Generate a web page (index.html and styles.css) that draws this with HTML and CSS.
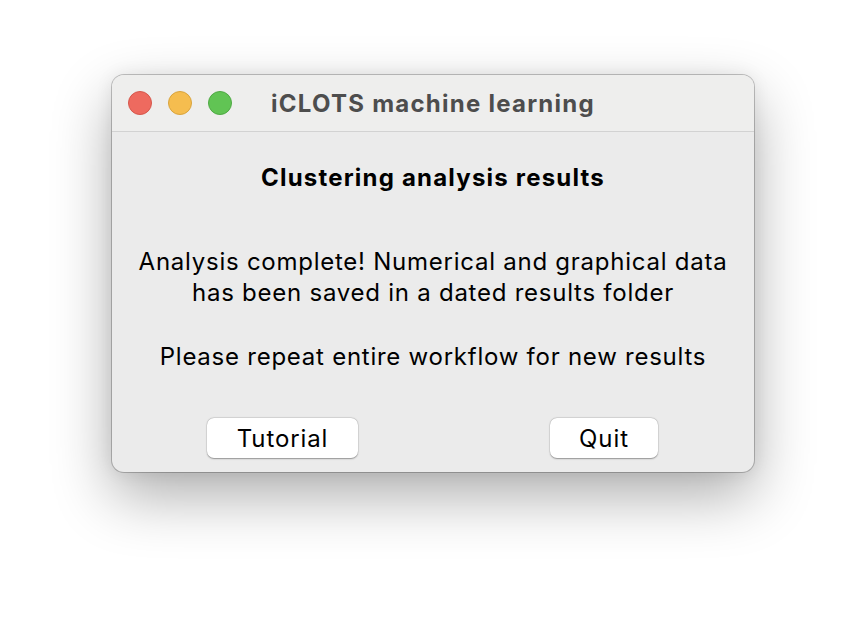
FILE: index.html
```html
<!DOCTYPE html>
<html>
<head>
<meta charset="utf-8">
<link rel="stylesheet" href="styles.css">
</head>
<body>
<div class="window">
  <div class="titlebar">
    <div class="lights">
      <span class="light red"></span>
      <span class="light yellow"></span>
      <span class="light green"></span>
    </div>
    <div class="title">iCLOTS machine learning</div>
  </div>
  <div class="content">
    <div class="heading">Clustering analysis results</div>
    <div class="para first">Analysis complete! Numerical and graphical data<br>has been saved in a dated results folder</div>
    <div class="para second">Please repeat entire workflow for new results</div>
    <div class="buttons">
      <button class="btn tutorial">Tutorial</button>
      <button class="btn quit">Quit</button>
    </div>
  </div>
</div>
</body>
</html>
```
FILE: styles.css
```css
html, body {
  margin: 0;
  padding: 0;
  background: #ffffff;
}
body {
  width: 866px;
  height: 620px;
  overflow: hidden;
  font-family: Inter, "Liberation Sans", sans-serif;
}
.window {
  margin-left: 112px;
  margin-top: 75px;
  width: 642px;
  height: 397px;
  box-sizing: border-box;
  border-radius: 12px;
  background: #ebebeb;
  box-shadow: 0 0 0 1px rgba(0,0,0,0.22), 0 24px 60px rgba(0,0,0,0.32), 0 0 18px rgba(0,0,0,0.08);
  overflow: hidden;
  display: flex;
  flex-direction: column;
}
.titlebar {
  height: 56px;
  flex: none;
  background: #eeeeed;
  border-bottom: 1px solid #d2d2d2;
  display: flex;
  align-items: center;
  position: relative;
}
.lights {
  display: flex;
  gap: 16px;
  padding-left: 16px;
  align-items: center;
}
.light {
  width: 24px;
  height: 24px;
  border-radius: 50%;
  box-sizing: border-box;
}
.red { background: #ee6a5f; border: 1px solid #d6574c; }
.yellow { background: #f5bd4f; border: 1px solid #d9a43d; }
.green { background: #61c454; border: 1px solid #4fa944; }
.title {
  position: absolute;
  left: 0;
  right: 0;
  top: 0;
  bottom: 0;
  display: flex;
  align-items: center;
  justify-content: center;
  font-weight: 700;
  font-size: 24px;
  letter-spacing: 1.25px;
  color: #4d4d4d;
  pointer-events: none;
}
.content {
  flex: 1;
  display: flex;
  flex-direction: column;
  align-items: center;
  color: #000;
  font-size: 24px;
  letter-spacing: 0.75px;
}
.heading {
  margin-top: 31px;
  line-height: 30px;
  font-weight: 700;
  letter-spacing: 1.2px;
}
.para {
  line-height: 31px;
  text-align: center;
}
.first { margin-top: 53px; }
.second { margin-top: 33px; }
.buttons {
  margin-top: 46px;
  align-self: stretch;
  display: flex;
}
.btn {
  height: 40px;
  border: none;
  border-radius: 7px;
  background: #ffffff;
  box-shadow: 0 0.5px 1.5px rgba(0,0,0,0.35), 0 0 0 0.5px rgba(0,0,0,0.08);
  font-family: inherit;
  font-size: 24px;
  letter-spacing: 0.9px;
  color: #000;
  padding: 0;
}
.tutorial { width: 151px; margin-left: 95px; }
.quit { width: 108px; margin-left: 192px; }
```
